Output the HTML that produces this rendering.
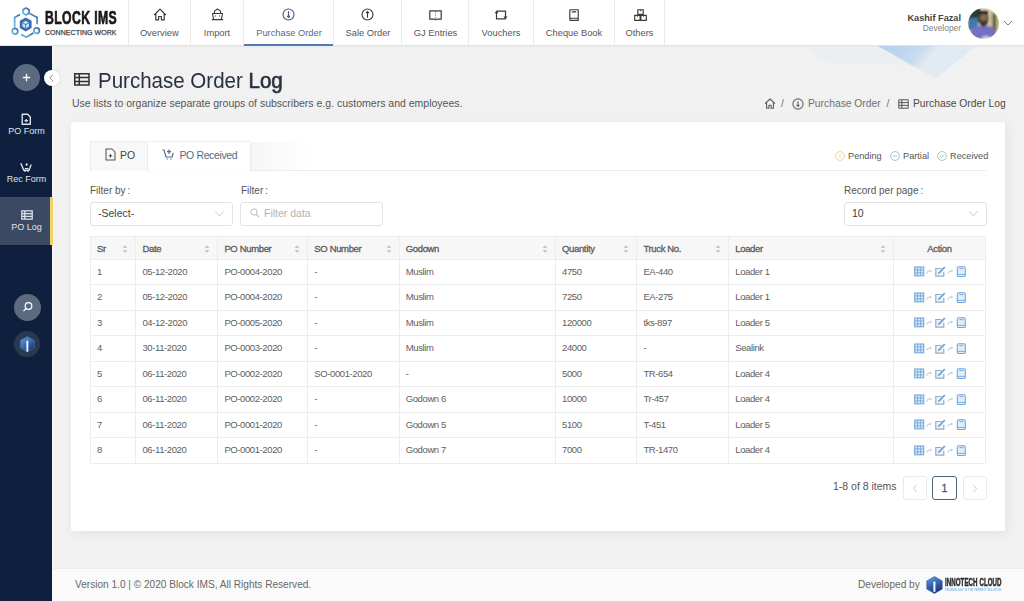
<!DOCTYPE html>
<html><head><meta charset="utf-8">
<style>
*{margin:0;padding:0;box-sizing:border-box}
html,body{width:1024px;height:601px;overflow:hidden}
body{font-family:"Liberation Sans",sans-serif;background:#f1f1f1;position:relative;color:#444}
.abs{position:absolute}
#header{position:absolute;left:0;top:0;width:1024px;height:46px;background:#fff;border-bottom:1px solid #e4e4e4;box-shadow:0 1px 2px rgba(0,0,0,0.03)}
.nav{position:absolute;top:0;height:45px;border-left:1px solid #ececec;text-align:center;font-size:9.3px;color:#555}
.nav .ic{position:absolute;top:9px;left:50%;margin-left:-6px;width:12px;height:12px}
.nav .tx{position:absolute;top:27px;left:0;right:0;white-space:nowrap;line-height:12px}
.nav.active{color:#4e6b8c}
.nav.active:after{content:"";position:absolute;left:0;right:0;bottom:-1px;height:2px;background:#4f7bb4}
#sidebar{position:absolute;left:0;top:46px;width:52px;height:555px;background:#0e203d;border-right:0}
#sbstrip{position:absolute;left:52px;top:46px;width:2px;height:555px;background:#f7f7f7}
.sb{position:absolute;left:0;width:53px;text-align:center;color:#dfe4ec;font-size:9px;white-space:nowrap}
#main-title{position:absolute;left:98px;top:68.5px;font-size:21.2px;color:#283140;white-space:nowrap;line-height:24px;transform:scaleX(0.968);transform-origin:0 0}
#card{position:absolute;left:71px;top:122px;width:934px;height:409px;background:#fff;border-radius:2px;box-shadow:2px 3px 12px rgba(0,0,0,0.06)}
table{border-collapse:collapse;position:absolute;left:90px;top:236px;width:896px;font-size:9.5px;color:#5e5e5e}
th,td{border:1px solid #ededed;text-align:left;padding:0 6px;white-space:nowrap}
th{height:23px;background:#f7f7f7;font-weight:normal;-webkit-text-stroke:0.3px #5c5c5c;color:#5c5c5c;position:relative;font-size:9.5px;letter-spacing:-0.35px}
td{height:25.45px;letter-spacing:-0.4px;padding-bottom:1.5px}
.sort{position:absolute;right:7px;top:7px;width:6px;height:10px}
#footer{position:absolute;left:53px;top:568px;width:971px;height:33px;background:#fafafa;border-top:1px solid #ececec}
</style></head><body>

<div id="header">
  <!-- logo -->
  <svg class="abs" style="left:8px;top:4px" width="36" height="38" viewBox="0 0 36 38">
    <defs><linearGradient id="lg" x1="0" y1="1" x2="1" y2="0"><stop offset="0" stop-color="#6cc0ea"/><stop offset="1" stop-color="#3a64a6"/></linearGradient></defs>
    <g fill="none" stroke="url(#lg)" stroke-width="1.7" stroke-linejoin="round">
      <path d="M18 4 L21 5.7 L21 9.2 L18 10.9 L15 9.2 L15 5.7 Z"/>
      <path d="M12 10.4 L6.6 13.6 L6.6 25"/>
      <path d="M20.9 8.9 L29.1 13.6 L29.1 20.3"/>
      <path d="M18 10.9 L18 13.8"/>
      <circle cx="7" cy="27.3" r="2.8"/>
      <circle cx="28.6" cy="26.6" r="2.8"/>
      <path d="M13 30.4 L18.4 33.2 L25.3 29.1"/>
    </g>
    <path d="M17.7 13.4 L23.6 16.8 L23.6 24 L17.7 27.4 L11.8 24 L11.8 16.8 Z" fill="#3b6aaa"/>
    <path d="M17.7 16.8 L21 18.7 L21 22.5 L17.7 24.4 L14.4 22.5 L14.4 18.7 Z" fill="#bfe6fa"/>
    <path d="M14.4 18.7 L17.7 20.6 L21 18.7 M17.7 20.6 V24.4" fill="none" stroke="#3b6aaa" stroke-width="0.9"/>
  </svg>
  <div class="abs" style="left:45px;top:8.5px;font-size:18.5px;font-weight:bold;color:#1a1a1a;transform:scaleX(0.66);transform-origin:0 0;letter-spacing:0.6px;white-space:nowrap;line-height:18px;-webkit-text-stroke:0.7px #1a1a1a">BLOCK IMS</div>
  <div class="abs" style="left:45px;top:29px;font-size:7px;color:#444;white-space:nowrap;line-height:7px;letter-spacing:0.05px;transform:scaleX(1.0);transform-origin:0 0;-webkit-text-stroke:0.25px #444">CONNECTING WORK</div>

  <div class="nav" style="left:128px;width:62px"><div class="tx" style="left:-0.5px">Overview</div></div>
  <div class="nav" style="left:190px;width:53px"><div class="tx">Import</div></div>
  <div class="nav active" style="left:243px;width:90px"><div class="tx" style="left:1px">Purchase Order</div></div>
  <div class="nav" style="left:333px;width:68px"><div class="tx" style="left:1px">Sale Order</div></div>
  <div class="nav" style="left:401px;width:67px"><div class="tx" style="left:1px">GJ Entries</div></div>
  <div class="nav" style="left:468px;width:65px"><div class="tx">Vouchers</div></div>
  <div class="nav" style="left:533px;width:81px"><div class="tx">Cheque Book</div></div>
  <div class="nav" style="left:614px;width:51px;border-right:1px solid #ececec"><div class="tx">Others</div></div>
  <svg class="abs" style="left:153px;top:8px" width="14" height="13" viewBox="0 0 14 13"><path d="M1.2 7 L7 1.2 L12.8 7 M2.8 5.6 V11.9 H5.6 V8.5 H8.4 V11.9 H11.2 V5.6" fill="none" stroke="#3a3a3a" stroke-width="1.2" stroke-linejoin="round"/></svg>
  <svg class="abs" style="left:211px;top:8px" width="13" height="13" viewBox="0 0 13 13"><path d="M3.3 5.5 Q3.3 2 5 2 L6.5 1 L8 2 Q9.7 2 9.7 5.5 M1.5 5.5 H11.5 L11 8.5 L10.2 11.6 H2.8 L2 8.5 Z M0.8 11.6 H12.2 M4.5 7.5 V8.5 M8.5 7.5 V8.5" fill="none" stroke="#3a3a3a" stroke-width="1.1" stroke-linejoin="round"/></svg>
  <svg class="abs" style="left:282px;top:8px" width="13" height="13" viewBox="0 0 13 13"><circle cx="6.5" cy="6.5" r="5.5" fill="none" stroke="#555e6a" stroke-width="1.15"/><path d="M6.5 3.3 V9.2 M5 7.8 L6.5 9.4 L8 7.8" fill="none" stroke="#3f5e85" stroke-width="1.1"/></svg>
  <svg class="abs" style="left:361px;top:8px" width="13" height="13" viewBox="0 0 13 13"><circle cx="6.5" cy="6.5" r="5.5" fill="none" stroke="#3a3a3a" stroke-width="1.15"/><path d="M6.5 9.7 V3.8 M5 5.2 L6.5 3.6 L8 5.2" fill="none" stroke="#3a3a3a" stroke-width="1.1"/></svg>
  <svg class="abs" style="left:429px;top:9.5px" width="13" height="11" viewBox="0 0 13 11"><path d="M0.8 0.8 H5.6 L6.5 1.4 L7.4 0.8 H12.2 V9.2 H7.4 L6.5 9.8 L5.6 9.2 H0.8 Z" fill="none" stroke="#3a3a3a" stroke-width="1.2" stroke-linejoin="round"/><path d="M6.5 1.6 V9.5" stroke="#777" stroke-width="0.8" stroke-dasharray="1 0.8"/></svg>
  <svg class="abs" style="left:494px;top:9.5px" width="14" height="10" viewBox="0 0 14 10"><path d="M2.5 2.5 V8.8 H11.5 M11.5 7 V1.2 H2.5" fill="none" stroke="#3a3a3a" stroke-width="1.2"/><path d="M0.5 3.3 L2.5 0.4 L4.5 3.3 Z M9.5 6.6 L11.5 9.5 L13.5 6.6 Z" fill="#3a3a3a"/></svg>
  <svg class="abs" style="left:569px;top:8.5px" width="10" height="12" viewBox="0 0 10 12"><path d="M0.8 1.2 Q0.8 0.7 1.3 0.7 H9.2 V11.3 H1.3 Q0.8 11.3 0.8 10.8 Z M0.8 9.2 H9.2 M2.8 2.9 H7.2" fill="none" stroke="#3a3a3a" stroke-width="1.15"/></svg>
  <svg class="abs" style="left:634px;top:8.5px" width="13" height="12" viewBox="0 0 13 12"><path d="M3.8 0.7 H9.2 V5.4 H3.8 Z M0.7 6.4 H6.1 V11.3 H0.7 Z M6.9 6.4 H12.3 V11.3 H6.9 Z" fill="none" stroke="#3a3a3a" stroke-width="1.15"/><path d="M5.6 1 L6.5 2.4 L7.4 1 M2.5 6.7 L3.4 8.1 L4.3 6.7 M8.7 6.7 L9.6 8.1 L10.5 6.7" fill="#3a3a3a"/></svg>

  <div class="abs" style="right:63px;top:13px;font-size:9.2px;font-weight:bold;color:#444;white-space:nowrap;line-height:11px;text-align:right">Kashif Fazal</div>
  <div class="abs" style="right:63px;top:23px;font-size:8.4px;color:#808080;white-space:nowrap;line-height:10px;text-align:right">Developer</div>
  <svg class="abs" style="left:968px;top:7.5px" width="31" height="31" viewBox="0 0 31 31"><defs><clipPath id="av"><circle cx="15.5" cy="15.5" r="15.3"/></clipPath><filter id="bl"><feGaussianBlur stdDeviation="0.9"/></filter></defs>
    <g clip-path="url(#av)"><rect width="31" height="31" fill="#d8d3b8"/>
    <g filter="url(#bl)">
    <rect x="0" y="0" width="12" height="14" fill="#2c3a3a"/>
    <rect x="0" y="10" width="10" height="12" fill="#3f79a8"/>
    <rect x="22" y="4" width="9" height="22" fill="#b9b184"/>
    <rect x="25" y="6" width="2.5" height="18" fill="#3a3a30"/>
    <path d="M2 31 L3 21 Q8 17 15 18 Q23 17 27 22 L29 31 Z" fill="#7470c4"/>
    <ellipse cx="15.5" cy="10" rx="5" ry="6.5" fill="#4a3528"/>
    <ellipse cx="15.5" cy="9.5" rx="3.5" ry="3.5" fill="#8a6a55"/>
    <path d="M10.5 11 Q15.5 22 20.5 11 Q20 17 15.5 19 Q11 17 10.5 11 Z" fill="#1e1a18"/>
    <rect x="11" y="3" width="9" height="3" fill="#1e1a18"/>
    <ellipse cx="18" cy="30" rx="4" ry="2" fill="#d9d2c0"/>
    </g></g></svg>
  <svg class="abs" style="left:1003px;top:20px" width="10" height="6" viewBox="0 0 10 6"><path d="M1 1 L5 5 L9 1" fill="none" stroke="#777" stroke-width="1"/></svg>
</div>

<!-- decorative -->
<svg class="abs" style="left:790px;top:46px" width="200" height="36" viewBox="0 0 200 36">
  <defs>
    <linearGradient id="dg" x1="0" y1="0" x2="1" y2="0.3"><stop offset="0" stop-color="#b3cdec"/><stop offset="0.45" stop-color="#c8dbf0"/><stop offset="0.6" stop-color="#e3ebf3"/><stop offset="1" stop-color="#dfe8f1"/></linearGradient>
    <filter id="db"><feGaussianBlur stdDeviation="0.6"/></filter>
  </defs>
  <path d="M15 0 Q25 14 45 18 L125 19 L88 0 Z" fill="#eaeff2" filter="url(#db)" opacity="0.8"/>
  <path d="M88 0 L143.6 31.8 Q146 32.5 148 31 L185.6 0 Z" fill="url(#dg)" filter="url(#db)"/>
</svg>
<div id="sbstrip"></div>
<div id="sidebar">
  <div class="abs" style="left:13px;top:18px;width:27px;height:27px;border-radius:50%;background:#5c6a80"><svg width="27" height="27" viewBox="0 0 27 27"><path d="M13.5 9.8 V17.2 M9.8 13.5 H17.2" stroke="#fff" stroke-width="1.3"/></svg></div>
  <div class="abs" style="left:43.5px;top:24px;width:16px;height:16px;border-radius:50%;background:#fff;box-shadow:0 0 2px rgba(0,0,0,.2)"><svg width="16" height="16" viewBox="0 0 16 16"><path d="M9.2 4.6 L5.8 7.9 L9.2 11.2" fill="none" stroke="#8a8a8a" stroke-width="1"/></svg></div>
</div>
<svg class="abs" style="left:21px;top:112.5px" width="10.5" height="12.5" viewBox="0 0 10.5 12.5"><path d="M1.2 1.2 H6.6 L9.3 3.9 V11.3 H1.2 Z" fill="none" stroke="#dde3eb" stroke-width="1.4" stroke-linejoin="round"/><path d="M3.5 7.6 H7 M5.25 5.9 V9.3" stroke="#dde3eb" stroke-width="1.2"/></svg>
<div class="sb" style="top:126px">PO Form</div>
<svg class="abs" style="left:20px;top:161.5px" width="12" height="10.5" viewBox="0 0 12 10.5"><path d="M0.8 1.2 L3.8 8.3 H9 L11.2 2.5" fill="none" stroke="#dde3eb" stroke-width="1.4" stroke-linejoin="round"/><path d="M4.4 9.6 H5.6 M7.4 9.6 H8.6 M4.8 6.5 H8.4" stroke="#dde3eb" stroke-width="1.2"/><path d="M6.7 1 L8 2.6 L6.7 4.2 L5.4 2.6 Z" fill="#dde3eb"/></svg>
<div class="sb" style="top:174px">Rec Form</div>
<div class="abs" style="left:0;top:197px;width:50px;height:48px;background:#3b4a62"></div>
<div class="abs" style="left:50px;top:197px;width:3px;height:48px;background:#f2d16b"></div>
<svg class="abs" style="left:20.5px;top:209.5px" width="12" height="10" viewBox="0 0 12 10"><path d="M0.8 0.8 H11.2 V9.2 H0.8 Z M0.8 3.6 H11.2 M0.8 6.4 H11.2 M3.8 0.8 V9.2" fill="none" stroke="#dde3eb" stroke-width="1.3"/></svg>
<div class="sb" style="top:222px">PO Log</div>
<div class="abs" style="left:13.5px;top:294px;width:27px;height:27px;border-radius:50%;background:#5c6a80"><svg width="27" height="27" viewBox="0 0 27 27"><circle cx="14.5" cy="12" r="3.3" fill="none" stroke="#fff" stroke-width="1.2"/><path d="M12 14.5 L9.5 17" stroke="#fff" stroke-width="1.3"/></svg></div>
<div class="abs" style="left:13.5px;top:330.5px;width:26.5px;height:26.5px;border-radius:50%;background:#2b394f"><svg width="26.5" height="26.5" viewBox="0 0 26.5 26.5"><defs><linearGradient id="sg" x1="0.1" y1="0.1" x2="0.8" y2="1"><stop offset="0" stop-color="#5aa0e6"/><stop offset="0.5" stop-color="#3a6fb8"/><stop offset="1" stop-color="#1b2f66"/></linearGradient></defs><path d="M13.3 5.5 L20.3 9.3 L20.3 17 L13.3 20.8 L6.3 17 L6.3 9.3 Z" fill="url(#sg)" stroke="#3e6aa8" stroke-width="0.8" stroke-linejoin="round" opacity="0.9"/><rect x="12.4" y="9.6" width="1.9" height="11.2" rx="0.9" fill="#eef3fa"/></svg></div>

<!-- title -->
<svg class="abs" style="left:73px;top:72px" width="18" height="15" viewBox="0 0 18 15"><path d="M1.75 1.75 H16 V13.1 H1.75 Z M1.75 5.5 H16 M1.75 9.4 H16 M6.3 1.75 V13.1" fill="none" stroke="#2a2f38" stroke-width="1.5"/></svg>
<div id="main-title">Purchase Order <span style="-webkit-text-stroke:0.6px #283140">Log</span></div>
<div class="abs" style="left:72px;top:97px;font-size:10.5px;color:#555;white-space:nowrap;line-height:12px">Use lists to organize separate groups of subscribers e.g. customers and employees.</div>

<!-- breadcrumb -->
<div class="abs" style="left:0;top:97px;height:13px;font-size:10.3px;color:#707070;white-space:nowrap;line-height:13px;width:1024px">
  <svg class="abs" style="left:764px;top:1px" width="12" height="11" viewBox="0 0 12 11"><path d="M1 5.6 L6 1 L11 5.6 M2.6 4.3 V10.2 H4.9 V7.2 H7.1 V10.2 H9.4 V4.3" fill="none" stroke="#5a5a5a" stroke-width="1.1" stroke-linejoin="round"/></svg>
  <span class="abs" style="left:781px;top:0">/</span>
  <svg class="abs" style="left:792px;top:1px" width="12" height="12" viewBox="0 0 12 12"><circle cx="6" cy="6" r="5.1" fill="none" stroke="#666" stroke-width="1.1"/><path d="M6 3.2 V8.3 M4.5 6.9 L6 8.4 L7.5 6.9" fill="none" stroke="#666" stroke-width="1.1"/></svg>
  <span class="abs" style="left:808px;top:0">Purchase Order</span>
  <span class="abs" style="left:886.5px;top:0">/</span>
  <svg class="abs" style="left:897.5px;top:2px" width="11" height="10" viewBox="0 0 11 10"><path d="M0.8 0.8 H10.2 V9.2 H0.8 Z M0.8 3.6 H10.2 M0.8 6.4 H10.2 M3.8 0.8 V9.2" fill="none" stroke="#555" stroke-width="1"/></svg>
  <span class="abs" style="left:913px;top:0;color:#4a4a4a">Purchase Order Log</span>
</div>

<div id="card"></div>

<!-- tabs -->
<div class="abs" style="left:90px;top:170px;width:896px;height:1px;background:#ececec"></div>
<div class="abs" style="left:90px;top:141px;width:58px;height:30px;background:#f8f8f8;border:1px solid #ededed;border-bottom:none"></div>
<svg class="abs" style="left:105px;top:148px" width="11" height="13" viewBox="0 0 11 13"><path d="M1 1 H7 L10 4 V12 H1 Z" fill="none" stroke="#555" stroke-width="1.05" stroke-linejoin="round"/><path d="M3.8 7.8 H7.2 M5.5 6.1 V9.5" stroke="#444" stroke-width="1"/></svg>
<div class="abs" style="left:120px;top:149px;font-size:10.5px;color:#444;line-height:12px">PO</div>
<div class="abs" style="left:250px;top:142px;width:60px;height:28px;background:linear-gradient(90deg,#f6f6f6,#fafafa 50%,rgba(255,255,255,0))"></div>
<div class="abs" style="left:149px;top:141px;width:101px;height:31px;background:#fff;border-top:1px solid #f0f0f0;box-shadow:1px 0 2px rgba(0,0,0,0.05)"></div>
<svg class="abs" style="left:162px;top:149px" width="12" height="11" viewBox="0 0 12 11"><path d="M0.5 1 H2 L4 8 H10 L11.3 4 M4.7 10 h1.2 M8.3 10 h1.2 M7 0.5 V5 M5 2.7 H9" fill="none" stroke="#4e6b8c" stroke-width="1.2"/></svg>
<div class="abs" style="left:179.5px;top:149px;font-size:10.5px;color:#4e6b8c;line-height:12px;letter-spacing:-0.38px;white-space:nowrap">PO Received</div>

<!-- legend -->
<svg class="abs" style="left:835px;top:151px" width="10" height="10" viewBox="0 0 10 10"><circle cx="5" cy="5" r="4.4" fill="none" stroke="#e9d39c" stroke-width="1"/><path d="M5 2.5 V5.8 M5 7 V7.8" stroke="#e9d39c" stroke-width="1"/></svg>
<div class="abs" style="left:848px;top:150.5px;font-size:9.2px;color:#555;line-height:11px">Pending</div>
<svg class="abs" style="left:890px;top:151px" width="10" height="10" viewBox="0 0 10 10"><circle cx="5" cy="5" r="4.4" fill="none" stroke="#a3bfe2" stroke-width="1"/><path d="M3 5 H7" stroke="#a3bfe2" stroke-width="1"/></svg>
<div class="abs" style="left:903px;top:150.5px;font-size:9.2px;color:#555;line-height:11px">Partial</div>
<svg class="abs" style="left:937px;top:151px" width="10" height="10" viewBox="0 0 10 10"><circle cx="5" cy="5" r="4.4" fill="none" stroke="#9ccdab" stroke-width="1"/><path d="M2.8 5 L4.4 6.6 L7.3 3.6" fill="none" stroke="#9ccdab" stroke-width="1"/></svg>
<div class="abs" style="left:950px;top:150.5px;font-size:9.2px;color:#555;line-height:11px">Received</div>

<!-- filters -->
<div class="abs" style="left:90px;top:185px;font-size:10px;color:#555;line-height:11px">Filter by<span style="margin-left:2px">:</span></div>
<div class="abs" style="left:90px;top:201.5px;width:143px;height:24px;border:1px solid #e3e3e3;border-radius:3px;background:#fff"></div>
<div class="abs" style="left:98px;top:207px;font-size:10.5px;color:#444;line-height:12px">-Select-</div>
<svg class="abs" style="left:215px;top:210.5px" width="9" height="6" viewBox="0 0 9 6"><path d="M0.5 0.5 L4.5 5 L8.5 0.5" fill="none" stroke="#c8c8c8" stroke-width="1"/></svg>

<div class="abs" style="left:241px;top:185px;font-size:10px;color:#555;line-height:11px">Filter<span style="margin-left:2px">:</span></div>
<div class="abs" style="left:240px;top:201.5px;width:143px;height:24px;border:1px solid #e3e3e3;border-radius:3px;background:#fff"></div>
<svg class="abs" style="left:250px;top:208px" width="10" height="10" viewBox="0 0 10 10"><circle cx="4" cy="4" r="3.2" fill="none" stroke="#bbb" stroke-width="1"/><path d="M6.3 6.3 L9 9" stroke="#bbb" stroke-width="1.1"/></svg>
<div class="abs" style="left:264px;top:207px;font-size:10.5px;color:#b3b3b3;line-height:12px">Filter data</div>

<div class="abs" style="left:844px;top:185px;font-size:10px;color:#555;line-height:11px">Record per page<span style="margin-left:2px">:</span></div>
<div class="abs" style="left:843.5px;top:201.5px;width:143px;height:24px;border:1px solid #e3e3e3;border-radius:3px;background:#fff"></div>
<div class="abs" style="left:852px;top:207px;font-size:10.5px;color:#444;line-height:12px">10</div>
<svg class="abs" style="left:969px;top:210.5px" width="9" height="6" viewBox="0 0 9 6"><path d="M0.5 0.5 L4.5 5 L8.5 0.5" fill="none" stroke="#c8c8c8" stroke-width="1"/></svg>

<table id="tbl"><colgroup><col style="width:45.5px"><col style="width:82.0px"><col style="width:90.0px"><col style="width:91.5px"><col style="width:156.5px"><col style="width:81.5px"><col style="width:92px"><col style="width:165px"><col style="width:92px"></colgroup>
<tr><th>Sr<svg class="sort" viewBox="0 0 6 10"><path d="M0.5 4 L3 1 L5.5 4 Z M0.5 6 L3 9 L5.5 6 Z" fill="#c8c8c8"/></svg></th><th>Date<svg class="sort" viewBox="0 0 6 10"><path d="M0.5 4 L3 1 L5.5 4 Z M0.5 6 L3 9 L5.5 6 Z" fill="#c8c8c8"/></svg></th><th>PO Number<svg class="sort" viewBox="0 0 6 10"><path d="M0.5 4 L3 1 L5.5 4 Z M0.5 6 L3 9 L5.5 6 Z" fill="#c8c8c8"/></svg></th><th>SO Number<svg class="sort" viewBox="0 0 6 10"><path d="M0.5 4 L3 1 L5.5 4 Z M0.5 6 L3 9 L5.5 6 Z" fill="#c8c8c8"/></svg></th><th>Godown<svg class="sort" viewBox="0 0 6 10"><path d="M0.5 4 L3 1 L5.5 4 Z M0.5 6 L3 9 L5.5 6 Z" fill="#c8c8c8"/></svg></th><th>Quantity<svg class="sort" viewBox="0 0 6 10"><path d="M0.5 4 L3 1 L5.5 4 Z M0.5 6 L3 9 L5.5 6 Z" fill="#c8c8c8"/></svg></th><th>Truck No.<svg class="sort" viewBox="0 0 6 10"><path d="M0.5 4 L3 1 L5.5 4 Z M0.5 6 L3 9 L5.5 6 Z" fill="#c8c8c8"/></svg></th><th>Loader<svg class="sort" viewBox="0 0 6 10"><path d="M0.5 4 L3 1 L5.5 4 Z M0.5 6 L3 9 L5.5 6 Z" fill="#c8c8c8"/></svg></th><th style="text-align:center">Action</th></tr>
<tr><td>1</td><td>05-12-2020</td><td>PO-0004-2020</td><td>-</td><td>Muslim</td><td>4750</td><td>EA-440</td><td>Loader 1</td><td><svg width="52" height="12" viewBox="0 0 52 12" style="display:block;margin:0 auto;position:relative;top:1px"><rect x="0.7" y="1" width="9" height="8.8" fill="#dbeaf8" stroke="#72a8db" stroke-width="1.1"/><path d="M0.7 3.9 H9.7 M0.7 6.9 H9.7 M3.7 1 V9.8 M6.7 1 V9.8" stroke="#72a8db" stroke-width="0.9"/><path d="M12.8 7.8 Q13 5 16.3 5" fill="none" stroke="#c5d0dc" stroke-width="1.1"/><path d="M15.6 3.4 L18.3 5 L15.6 6.6 Z" fill="#c5d0dc"/><path d="M27.5 2.5 H21.8 V10.2 H29.8 V5.8" fill="#eef4fa" stroke="#9aabbd" stroke-width="1.2"/><path d="M24.3 7.7 L30.8 1.2" stroke="#6aa3d8" stroke-width="1.7"/><path d="M34 7.8 Q34.2 5 37.5 5" fill="none" stroke="#c5d0dc" stroke-width="1.1"/><path d="M36.8 3.4 L39.5 5 L36.8 6.6 Z" fill="#c5d0dc"/><rect x="43.3" y="0.7" width="8" height="9.8" rx="1.3" fill="#e0eefa" stroke="#72a8db" stroke-width="1.1"/><path d="M43.3 8.4 H51.3 M45.3 2.6 H49.3" stroke="#72a8db" stroke-width="0.9"/></svg></td></tr>
<tr><td>2</td><td>05-12-2020</td><td>PO-0004-2020</td><td>-</td><td>Muslim</td><td>7250</td><td>EA-275</td><td>Loader 1</td><td><svg width="52" height="12" viewBox="0 0 52 12" style="display:block;margin:0 auto;position:relative;top:1px"><rect x="0.7" y="1" width="9" height="8.8" fill="#dbeaf8" stroke="#72a8db" stroke-width="1.1"/><path d="M0.7 3.9 H9.7 M0.7 6.9 H9.7 M3.7 1 V9.8 M6.7 1 V9.8" stroke="#72a8db" stroke-width="0.9"/><path d="M12.8 7.8 Q13 5 16.3 5" fill="none" stroke="#c5d0dc" stroke-width="1.1"/><path d="M15.6 3.4 L18.3 5 L15.6 6.6 Z" fill="#c5d0dc"/><path d="M27.5 2.5 H21.8 V10.2 H29.8 V5.8" fill="#eef4fa" stroke="#9aabbd" stroke-width="1.2"/><path d="M24.3 7.7 L30.8 1.2" stroke="#6aa3d8" stroke-width="1.7"/><path d="M34 7.8 Q34.2 5 37.5 5" fill="none" stroke="#c5d0dc" stroke-width="1.1"/><path d="M36.8 3.4 L39.5 5 L36.8 6.6 Z" fill="#c5d0dc"/><rect x="43.3" y="0.7" width="8" height="9.8" rx="1.3" fill="#e0eefa" stroke="#72a8db" stroke-width="1.1"/><path d="M43.3 8.4 H51.3 M45.3 2.6 H49.3" stroke="#72a8db" stroke-width="0.9"/></svg></td></tr>
<tr><td>3</td><td>04-12-2020</td><td>PO-0005-2020</td><td>-</td><td>Muslim</td><td>120000</td><td>tks-897</td><td>Loader 5</td><td><svg width="52" height="12" viewBox="0 0 52 12" style="display:block;margin:0 auto;position:relative;top:1px"><rect x="0.7" y="1" width="9" height="8.8" fill="#dbeaf8" stroke="#72a8db" stroke-width="1.1"/><path d="M0.7 3.9 H9.7 M0.7 6.9 H9.7 M3.7 1 V9.8 M6.7 1 V9.8" stroke="#72a8db" stroke-width="0.9"/><path d="M12.8 7.8 Q13 5 16.3 5" fill="none" stroke="#c5d0dc" stroke-width="1.1"/><path d="M15.6 3.4 L18.3 5 L15.6 6.6 Z" fill="#c5d0dc"/><path d="M27.5 2.5 H21.8 V10.2 H29.8 V5.8" fill="#eef4fa" stroke="#9aabbd" stroke-width="1.2"/><path d="M24.3 7.7 L30.8 1.2" stroke="#6aa3d8" stroke-width="1.7"/><path d="M34 7.8 Q34.2 5 37.5 5" fill="none" stroke="#c5d0dc" stroke-width="1.1"/><path d="M36.8 3.4 L39.5 5 L36.8 6.6 Z" fill="#c5d0dc"/><rect x="43.3" y="0.7" width="8" height="9.8" rx="1.3" fill="#e0eefa" stroke="#72a8db" stroke-width="1.1"/><path d="M43.3 8.4 H51.3 M45.3 2.6 H49.3" stroke="#72a8db" stroke-width="0.9"/></svg></td></tr>
<tr><td>4</td><td>30-11-2020</td><td>PO-0003-2020</td><td>-</td><td>Muslim</td><td>24000</td><td>-</td><td>Sealink</td><td><svg width="52" height="12" viewBox="0 0 52 12" style="display:block;margin:0 auto;position:relative;top:1px"><rect x="0.7" y="1" width="9" height="8.8" fill="#dbeaf8" stroke="#72a8db" stroke-width="1.1"/><path d="M0.7 3.9 H9.7 M0.7 6.9 H9.7 M3.7 1 V9.8 M6.7 1 V9.8" stroke="#72a8db" stroke-width="0.9"/><path d="M12.8 7.8 Q13 5 16.3 5" fill="none" stroke="#c5d0dc" stroke-width="1.1"/><path d="M15.6 3.4 L18.3 5 L15.6 6.6 Z" fill="#c5d0dc"/><path d="M27.5 2.5 H21.8 V10.2 H29.8 V5.8" fill="#eef4fa" stroke="#9aabbd" stroke-width="1.2"/><path d="M24.3 7.7 L30.8 1.2" stroke="#6aa3d8" stroke-width="1.7"/><path d="M34 7.8 Q34.2 5 37.5 5" fill="none" stroke="#c5d0dc" stroke-width="1.1"/><path d="M36.8 3.4 L39.5 5 L36.8 6.6 Z" fill="#c5d0dc"/><rect x="43.3" y="0.7" width="8" height="9.8" rx="1.3" fill="#e0eefa" stroke="#72a8db" stroke-width="1.1"/><path d="M43.3 8.4 H51.3 M45.3 2.6 H49.3" stroke="#72a8db" stroke-width="0.9"/></svg></td></tr>
<tr><td>5</td><td>06-11-2020</td><td>PO-0002-2020</td><td>SO-0001-2020</td><td>-</td><td>5000</td><td>TR-654</td><td>Loader 4</td><td><svg width="52" height="12" viewBox="0 0 52 12" style="display:block;margin:0 auto;position:relative;top:1px"><rect x="0.7" y="1" width="9" height="8.8" fill="#dbeaf8" stroke="#72a8db" stroke-width="1.1"/><path d="M0.7 3.9 H9.7 M0.7 6.9 H9.7 M3.7 1 V9.8 M6.7 1 V9.8" stroke="#72a8db" stroke-width="0.9"/><path d="M12.8 7.8 Q13 5 16.3 5" fill="none" stroke="#c5d0dc" stroke-width="1.1"/><path d="M15.6 3.4 L18.3 5 L15.6 6.6 Z" fill="#c5d0dc"/><path d="M27.5 2.5 H21.8 V10.2 H29.8 V5.8" fill="#eef4fa" stroke="#9aabbd" stroke-width="1.2"/><path d="M24.3 7.7 L30.8 1.2" stroke="#6aa3d8" stroke-width="1.7"/><path d="M34 7.8 Q34.2 5 37.5 5" fill="none" stroke="#c5d0dc" stroke-width="1.1"/><path d="M36.8 3.4 L39.5 5 L36.8 6.6 Z" fill="#c5d0dc"/><rect x="43.3" y="0.7" width="8" height="9.8" rx="1.3" fill="#e0eefa" stroke="#72a8db" stroke-width="1.1"/><path d="M43.3 8.4 H51.3 M45.3 2.6 H49.3" stroke="#72a8db" stroke-width="0.9"/></svg></td></tr>
<tr><td>6</td><td>06-11-2020</td><td>PO-0002-2020</td><td>-</td><td>Godown 6</td><td>10000</td><td>Tr-457</td><td>Loader 4</td><td><svg width="52" height="12" viewBox="0 0 52 12" style="display:block;margin:0 auto;position:relative;top:1px"><rect x="0.7" y="1" width="9" height="8.8" fill="#dbeaf8" stroke="#72a8db" stroke-width="1.1"/><path d="M0.7 3.9 H9.7 M0.7 6.9 H9.7 M3.7 1 V9.8 M6.7 1 V9.8" stroke="#72a8db" stroke-width="0.9"/><path d="M12.8 7.8 Q13 5 16.3 5" fill="none" stroke="#c5d0dc" stroke-width="1.1"/><path d="M15.6 3.4 L18.3 5 L15.6 6.6 Z" fill="#c5d0dc"/><path d="M27.5 2.5 H21.8 V10.2 H29.8 V5.8" fill="#eef4fa" stroke="#9aabbd" stroke-width="1.2"/><path d="M24.3 7.7 L30.8 1.2" stroke="#6aa3d8" stroke-width="1.7"/><path d="M34 7.8 Q34.2 5 37.5 5" fill="none" stroke="#c5d0dc" stroke-width="1.1"/><path d="M36.8 3.4 L39.5 5 L36.8 6.6 Z" fill="#c5d0dc"/><rect x="43.3" y="0.7" width="8" height="9.8" rx="1.3" fill="#e0eefa" stroke="#72a8db" stroke-width="1.1"/><path d="M43.3 8.4 H51.3 M45.3 2.6 H49.3" stroke="#72a8db" stroke-width="0.9"/></svg></td></tr>
<tr><td>7</td><td>06-11-2020</td><td>PO-0001-2020</td><td>-</td><td>Godown 5</td><td>5100</td><td>T-451</td><td>Loader 5</td><td><svg width="52" height="12" viewBox="0 0 52 12" style="display:block;margin:0 auto;position:relative;top:1px"><rect x="0.7" y="1" width="9" height="8.8" fill="#dbeaf8" stroke="#72a8db" stroke-width="1.1"/><path d="M0.7 3.9 H9.7 M0.7 6.9 H9.7 M3.7 1 V9.8 M6.7 1 V9.8" stroke="#72a8db" stroke-width="0.9"/><path d="M12.8 7.8 Q13 5 16.3 5" fill="none" stroke="#c5d0dc" stroke-width="1.1"/><path d="M15.6 3.4 L18.3 5 L15.6 6.6 Z" fill="#c5d0dc"/><path d="M27.5 2.5 H21.8 V10.2 H29.8 V5.8" fill="#eef4fa" stroke="#9aabbd" stroke-width="1.2"/><path d="M24.3 7.7 L30.8 1.2" stroke="#6aa3d8" stroke-width="1.7"/><path d="M34 7.8 Q34.2 5 37.5 5" fill="none" stroke="#c5d0dc" stroke-width="1.1"/><path d="M36.8 3.4 L39.5 5 L36.8 6.6 Z" fill="#c5d0dc"/><rect x="43.3" y="0.7" width="8" height="9.8" rx="1.3" fill="#e0eefa" stroke="#72a8db" stroke-width="1.1"/><path d="M43.3 8.4 H51.3 M45.3 2.6 H49.3" stroke="#72a8db" stroke-width="0.9"/></svg></td></tr>
<tr><td>8</td><td>06-11-2020</td><td>PO-0001-2020</td><td>-</td><td>Godown 7</td><td>7000</td><td>TR-1470</td><td>Loader 4</td><td><svg width="52" height="12" viewBox="0 0 52 12" style="display:block;margin:0 auto;position:relative;top:1px"><rect x="0.7" y="1" width="9" height="8.8" fill="#dbeaf8" stroke="#72a8db" stroke-width="1.1"/><path d="M0.7 3.9 H9.7 M0.7 6.9 H9.7 M3.7 1 V9.8 M6.7 1 V9.8" stroke="#72a8db" stroke-width="0.9"/><path d="M12.8 7.8 Q13 5 16.3 5" fill="none" stroke="#c5d0dc" stroke-width="1.1"/><path d="M15.6 3.4 L18.3 5 L15.6 6.6 Z" fill="#c5d0dc"/><path d="M27.5 2.5 H21.8 V10.2 H29.8 V5.8" fill="#eef4fa" stroke="#9aabbd" stroke-width="1.2"/><path d="M24.3 7.7 L30.8 1.2" stroke="#6aa3d8" stroke-width="1.7"/><path d="M34 7.8 Q34.2 5 37.5 5" fill="none" stroke="#c5d0dc" stroke-width="1.1"/><path d="M36.8 3.4 L39.5 5 L36.8 6.6 Z" fill="#c5d0dc"/><rect x="43.3" y="0.7" width="8" height="9.8" rx="1.3" fill="#e0eefa" stroke="#72a8db" stroke-width="1.1"/><path d="M43.3 8.4 H51.3 M45.3 2.6 H49.3" stroke="#72a8db" stroke-width="0.9"/></svg></td></tr>
</table>

<!-- pagination -->
<div class="abs" style="left:833px;top:480.3px;font-size:10.5px;color:#555;line-height:12px;white-space:nowrap">1-8 of 8 items</div>
<div class="abs" style="left:902.5px;top:476px;width:24px;height:24px;border:1px solid #e8e8e8;border-radius:3px;background:#fff"><svg width="22" height="22" viewBox="0 0 22 22"><path d="M12.5 8 L9.5 11.5 L12.5 15" fill="none" stroke="#ccc" stroke-width="1"/></svg></div>
<div class="abs" style="left:932px;top:476px;width:25px;height:24px;border:1px solid #4e6278;border-radius:3px;background:#fff;font-size:10.5px;color:#3e5878;text-align:center;line-height:22px;-webkit-text-stroke:0.3px #3e5878">1</div>
<div class="abs" style="left:962.5px;top:476px;width:24px;height:24px;border:1px solid #e8e8e8;border-radius:3px;background:#fff"><svg width="22" height="22" viewBox="0 0 22 22"><path d="M9.5 8 L12.5 11.5 L9.5 15" fill="none" stroke="#ccc" stroke-width="1"/></svg></div>

<div id="footer"></div>
<div class="abs" style="left:75px;top:579px;font-size:10.1px;color:#686868;line-height:12px;white-space:nowrap">Version 1.0 | &copy; 2020 Block IMS, All Rights Reserved.</div>
<div class="abs" style="left:858px;top:578.5px;font-size:10.1px;color:#686868;line-height:12px;white-space:nowrap">Developed by</div>
<svg class="abs" style="left:926px;top:576px" width="17" height="18" viewBox="0 0 17 18"><defs><linearGradient id="ig" x1="0.2" y1="0" x2="0.6" y2="1"><stop offset="0" stop-color="#5a9ae0"/><stop offset="0.55" stop-color="#2e5fae"/><stop offset="1" stop-color="#1c3470"/></linearGradient></defs><path d="M8.5 0.6 L16.2 4.9 L16.2 13.1 L8.5 17.4 L0.8 13.1 L0.8 4.9 Z" fill="url(#ig)" stroke="#2a4f90" stroke-width="0.6" stroke-linejoin="round"/><rect x="7.4" y="5.5" width="2" height="10.5" rx="0.8" fill="#f4f7fb"/></svg>
<div class="abs" style="left:945px;top:577px;font-size:11px;font-weight:bold;color:#2a2a2a;line-height:11px;white-space:nowrap;transform:scaleX(0.56);transform-origin:0 0;letter-spacing:0.1px;-webkit-text-stroke:0.5px #2a2a2a">INNOTECH CLOUD</div>
<div class="abs" style="left:945px;top:587.5px;font-size:4px;font-weight:bold;color:#78b6e6;line-height:4px;white-space:nowrap;transform:scaleX(0.635);transform-origin:0 0;letter-spacing:0.15px">TECHNOLOGY IS THE PERFECT SOLUTION</div>
</body></html>
